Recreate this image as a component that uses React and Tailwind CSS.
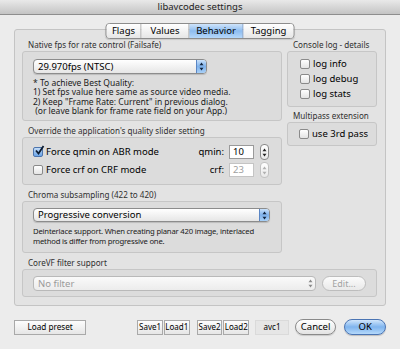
import React from "react";

const FONT = "font-['Lucida_Grande','Noto_Sans','DejaVu_Sans',sans-serif]";

function Arrows({ color = "#000" }) {
  return (
    <svg width="5" height="9" viewBox="0 0 5 9">
      <path d="M2.5 0.5 L4.5 3.3 L0.5 3.3 Z" fill={color} />
      <path d="M2.5 8.5 L4.5 5.7 L0.5 5.7 Z" fill={color} />
    </svg>
  );
}

function Popup({ text, className, disabled }) {
  return (
    <div
      className={
        "flex items-stretch rounded-[4px] border overflow-hidden " +
        (disabled
          ? "border-[#b9b9b9] bg-gradient-to-b from-[#fafafa] to-[#ececec] "
          : "border-[#8c8c8c] bg-gradient-to-b from-[#ffffff] to-[#e6e6e6] shadow-[0_1px_1px_rgba(0,0,0,0.15)] ") +
        className
      }
    >
      <div
        className={
          "flex-1 flex items-center pl-[4px] text-[9.5px] leading-none whitespace-nowrap " +
          (disabled ? "text-[#9a9a9a]" : "text-black")
        }
      >
        {text}
      </div>
      {disabled ? (
        <div className="w-[10px] flex items-center justify-center">
          <Arrows color="#8a8a8a" />
        </div>
      ) : (
        <div className="w-[10px] flex items-center justify-center border-l border-[#5b86c4] bg-gradient-to-b from-[#c9e1fa] via-[#7fb2ec] to-[#a8d0f7]">
          <Arrows color="#10243f" />
        </div>
      )}
    </div>
  );
}

function Checkbox({ checked }) {
  return (
    <div
      className={
        "w-[10px] h-[10px] rounded-[2px] border shrink-0 relative " +
        (checked
          ? "border-[#4d75ad] bg-gradient-to-b from-[#c4dcf6] to-[#6aa4e8]"
          : "border-[#8a8a8a] bg-gradient-to-b from-[#ffffff] to-[#e4e4e4]")
      }
    >
      {checked && (
        <svg className="absolute left-[0px] top-[-3px]" width="11" height="11" viewBox="0 0 11 11">
          <path d="M2 5.5 L4.5 8.5 L9.5 1" stroke="#0d1d33" strokeWidth="1.8" fill="none" />
        </svg>
      )}
    </div>
  );
}

function CheckRow({ label, checked, className = "" }) {
  return (
    <div className={"flex items-center gap-[3px] whitespace-nowrap " + className}>
      <Checkbox checked={checked} />
      <span className="text-[9.5px] leading-none text-black">{label}</span>
    </div>
  );
}

function GroupLabel({ children, className = "" }) {
  return (
    <div className={"h-[12px] text-[8.1px] leading-[12px] text-[#303030] pl-[6px] whitespace-nowrap " + className}>
      {children}
    </div>
  );
}

function Stepper({ disabled }) {
  return (
    <div
      className={
        "w-[9px] h-[16px] rounded-[4px] border flex items-center justify-center bg-gradient-to-b from-[#ffffff] to-[#e8e8e8] " +
        (disabled ? "border-[#c2c2c2]" : "border-[#8a8a8a]")
      }
    >
      <Arrows color={disabled ? "#b0b0b0" : "#222"} />
    </div>
  );
}

function SquareBtn({ children, className = "" }) {
  return (
    <div
      className={
        "h-[15px] flex items-center justify-center border border-[#a9a9a9] bg-gradient-to-b from-[#fdfdfd] to-[#e6e6e6] leading-none text-black whitespace-nowrap " +
        className
      }
    >
      {children}
    </div>
  );
}

export default function App() {
  return (
    <div className={"w-[400px] h-[349px] bg-[#ececec] overflow-hidden " + FONT}>
      {/* Title bar */}
      <div className="h-[15px] bg-gradient-to-b from-[#e9e9e9] to-[#c4c4c4] border-b border-[#8e8e8e] flex items-center justify-center text-[9.5px] leading-none text-[#1e1e1e]">
        libavcodec settings
      </div>

      {/* Tab panel */}
      <div className="relative mt-[14px] mx-[14px] h-[277px] rounded-[3px] border border-[#c4c4c4] bg-[#e3e3e3] pt-[9px] px-[7px]">
        <div className="absolute left-1/2 -translate-x-1/2 top-[-7px] h-[16px] flex rounded-[4px] border border-[#8c8c8c] overflow-hidden shadow-[0_1px_1px_rgba(0,0,0,0.12)] text-[9.5px] leading-none">
          <div className="w-[35px] flex items-center justify-center bg-gradient-to-b from-[#ffffff] to-[#e6e6e6] border-r border-[#a8a8a8]">Flags</div>
          <div className="w-[48px] flex items-center justify-center bg-gradient-to-b from-[#ffffff] to-[#e6e6e6] border-r border-[#a8a8a8]">Values</div>
          <div className="w-[54px] flex items-center justify-center bg-gradient-to-b from-[#cfe4fa] via-[#8dbcf0] to-[#b6d8fa] border-r border-[#6e94c8]">Behavior</div>
          <div className="w-[50px] flex items-center justify-center bg-gradient-to-b from-[#ffffff] to-[#e6e6e6]">Tagging</div>
        </div>

        <div className="flex gap-[5px]">
          {/* Left column */}
          <div className="w-[260px]">
            <GroupLabel>Native fps for rate control (Failsafe)</GroupLabel>
            <div className="h-[70px] rounded-[3px] border border-[#c6c6c6] bg-[#dcdcdc] pt-[7px] px-[10px]">
              <Popup text="29.970fps (NTSC)" className="w-[174px] h-[15px]" />
              <div className="mt-[4px] text-[8.5px] leading-[9.3px] text-[#1a1a1a] whitespace-nowrap">
                <div>* To achieve Best Quality:</div>
                <div>1) Set fps value here same as source video media.</div>
                <div>2) Keep "Frame Rate: Current" in previous dialog.</div>
                <div>&nbsp;(or leave blank for frame rate field on your App.)</div>
              </div>
            </div>

            <GroupLabel className="mt-[4px]">Override the application's quality slider setting</GroupLabel>
            <div className="h-[48px] rounded-[3px] border border-[#c6c6c6] bg-[#dcdcdc] pt-[6px] pl-[10px] pr-[12px]">
              <div className="grid grid-cols-[1fr_auto_25px_15px] grid-rows-[16px_16px] gap-y-[2px] items-center">
                <CheckRow label="Force qmin on ABR mode" checked />
                <div className="text-[9.5px] leading-none text-right pr-[5px]">qmin:</div>
                <div className="h-[14px] bg-white border border-[#9a9a9a] text-[9.5px] leading-none flex items-center pl-[3px]">10</div>
                <div className="ml-[6px]"><Stepper /></div>
                <CheckRow label="Force crf on CRF mode" />
                <div className="text-[9.5px] leading-none text-right pr-[5px]">crf:</div>
                <div className="h-[14px] bg-white border border-[#c4c4c4] text-[9.5px] leading-none flex items-center pl-[3px] text-[#a0a0a0]">23</div>
                <div className="ml-[6px]"><Stepper disabled /></div>
              </div>
            </div>

            <GroupLabel className="mt-[4px]">Chroma subsampling (422 to 420)</GroupLabel>
            <div className="h-[52px] rounded-[3px] border border-[#c6c6c6] bg-[#dcdcdc] pt-[6px] px-[10px]">
              <Popup text="Progressive conversion" className="w-[237px] h-[14px]" />
              <div className="mt-[4px] text-[7.7px] leading-[10px] tracking-[-0.2px] text-[#1a1a1a] whitespace-nowrap">
                <div>Deinterlace support. When creating planar 420 image, interlaced</div>
                <div>method is differ from progressive one.</div>
              </div>
            </div>
          </div>

          {/* Right column */}
          <div className="w-[90px]">
            <GroupLabel>Console log - details</GroupLabel>
            <div className="h-[56px] rounded-[3px] border border-[#c6c6c6] bg-[#dcdcdc] pt-[5px] pl-[12px] flex flex-col gap-[1px]">
              <CheckRow label="log info" className="h-[14px]" />
              <CheckRow label="log debug" className="h-[14px]" />
              <CheckRow label="log stats" className="h-[14px]" />
            </div>
            <GroupLabel className="mt-[3px]">Multipass extension</GroupLabel>
            <div className="h-[24px] rounded-[3px] border border-[#c6c6c6] bg-[#dcdcdc] pt-[4px] pl-[11px]">
              <CheckRow label="use 3rd pass" className="h-[14px]" />
            </div>
          </div>
        </div>

        <GroupLabel className="mt-[4px]">CoreVF filter support</GroupLabel>
        <div className="w-[355px] h-[28px] rounded-[3px] border border-[#c6c6c6] bg-[#dcdcdc] pt-[6px] px-[10px] flex items-start gap-[6px]">
          <Popup text="No filter" disabled className="w-[283px] h-[15px]" />
          <div className="w-[44px] h-[15px] rounded-full border border-[#bdbdbd] bg-gradient-to-b from-[#fbfbfb] to-[#e9e9e9] flex items-center justify-center text-[9px] leading-none text-[#a2a2a2]">
            Edit...
          </div>
        </div>
      </div>

      {/* Bottom buttons */}
      <div className="mt-[13px] mx-[14px] h-[16px] flex items-center">
        <SquareBtn className="w-[73px] text-[8.2px]">Load preset</SquareBtn>
        <SquareBtn className="ml-[51px] w-[26px] text-[8px]">Save1</SquareBtn>
        <SquareBtn className="ml-[1px] w-[26px] text-[8px]">Load1</SquareBtn>
        <SquareBtn className="ml-[7px] w-[26px] text-[8px]">Save2</SquareBtn>
        <SquareBtn className="ml-[1px] w-[26px] text-[8px]">Load2</SquareBtn>
        <div className="ml-[6px] w-[34px] h-[15px] border border-[#dadada] bg-[#e6e6e6] flex items-center justify-center text-[8px] leading-none text-black">avc1</div>
        <div className="ml-[6px] w-[42px] h-[16px] rounded-full border border-[#8a8a8a] bg-gradient-to-b from-[#ffffff] to-[#e3e3e3] shadow-[0_1px_1px_rgba(0,0,0,0.15)] flex items-center justify-center text-[9.5px] leading-none">Cancel</div>
        <div className="ml-[8px] w-[42px] h-[16px] rounded-full border border-[#4a74b3] bg-gradient-to-b from-[#d1e6fb] via-[#7fb4ee] to-[#b5d9fb] shadow-[0_1px_1px_rgba(0,0,0,0.2)] flex items-center justify-center text-[9.5px] leading-none">OK</div>
      </div>
    </div>
  );
}
